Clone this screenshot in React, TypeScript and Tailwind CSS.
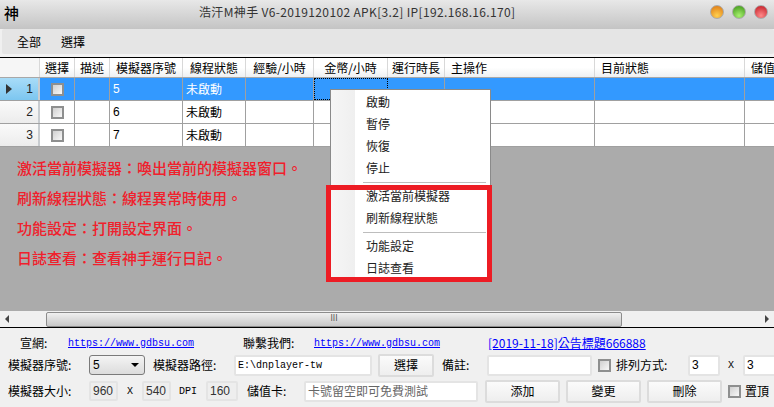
const cjk = "font-['Noto_Sans_CJK_TC','Noto_Sans_CJK_SC',sans-serif]";
const mono = "font-['Liberation_Mono',monospace]";
const num = "font-['Liberation_Sans',sans-serif]";

const COLS = "grid grid-cols-[40px_35px_35px_73px_63px_68px_74px_57px_150px_150px_150px]";
const headers = ["", "選擇", "描述", "模擬器序號", "線程狀態", "經驗/小時", "金幣/小時", "運行時長", "主操作", "目前狀態", "儲值卡"];

function Check({ className = "" }: { className?: string }) {
  return (
    <span className={`block w-[13px] h-[13px] border-2 border-[#8e8f8f] bg-gradient-to-br from-[#d0d0d0] to-[#f8f8f8] shrink-0 ${className}`} />
  );
}

function Row({ n, id, selected }: { n: number; id: string; selected?: boolean }) {
  const cell = `border-r border-[#a0a0a0] ${selected ? "bg-[#3399ff] text-white" : "bg-white text-black"}`;
  return (
    <div className={`${COLS} h-[23px] border-b border-[#a0a0a0] w-[950px] shrink-0`}>
      <div className={`flex items-center justify-between pr-[5px] pl-[6px] text-[12px] text-[#222] border-r-2 border-[#c8ccd0] ${num} ${selected ? "bg-gradient-to-b from-[#a8dcf8] to-[#7cc6f0]" : "bg-gradient-to-b from-[#fafafa] to-[#ececec]"}`}>
        {selected ? <span className="w-0 h-0 border-y-[5px] border-y-transparent border-l-[6px] border-l-[#333]" /> : <span />}
        <span>{n}</span>
      </div>
      <div className={`${cell} flex items-center justify-center`}><Check /></div>
      <div className={cell} />
      <div className={`${cell} flex items-center pl-[3px] text-[12px] ${num}`}>{id}</div>
      <div className={`${cell} flex items-center pl-[3px] text-[12px] ${cjk}`}>未啟動</div>
      <div className={cell} />
      <div className={`${cell} ${selected ? "border border-dotted border-black" : ""}`} />
      <div className={cell} />
      <div className={cell} />
      <div className={cell} />
      <div className={cell} />
    </div>
  );
}

function Btn({ children, className = "" }: { children: React.ReactNode; className?: string }) {
  return (
    <div className={`flex items-center justify-center border-2 border-[#dcdcdc] rounded-[2px] bg-gradient-to-b from-[#fbfbfb] to-[#eeeeee] text-[12px] text-black ${className}`}>
      {children}
    </div>
  );
}

function Field({ children, className = "", muted }: { children?: React.ReactNode; className?: string; muted?: boolean }) {
  return (
    <div className={`flex items-center pl-[2px] border-2 border-[#e4e4e4] rounded-[2px] ${muted ? "bg-[#eeeeee] text-[#333]" : "bg-white text-black"} ${className}`}>
      {children}
    </div>
  );
}

function MenuItem({ children }: { children: React.ReactNode }) {
  return <div className="h-[22px] pl-[35px] leading-[22px] text-[12px] text-[#222]">{children}</div>;
}

function MenuSep() {
  return <div className="ml-[32px] mr-[4px] mt-[3px] mb-[2px] h-px bg-[#bdbdbd]" />;
}

function Dot({ from, to }: { from: string; to: string }) {
  return (
    <span
      className="block w-[14px] h-[14px] rounded-full border border-[#aaa]"
      style={{ background: `radial-gradient(circle at 50% 80%, ${from}, ${to})` }}
    />
  );
}

export default function App() {
  return (
    <div className={`relative w-[774px] h-[407px] overflow-hidden bg-[#f0f0f0] flex flex-col ${cjk}`}>
      {/* title bar */}
      <div className="h-[29px] pb-[5px] flex items-center bg-gradient-to-b from-[#e8e8e8] to-[#c4c4c4] shrink-0">
        <span className="ml-[4px] w-[14px] text-[15px] font-medium leading-none text-black">神</span>
        <span className="ml-[181px] w-[316px] whitespace-nowrap text-[12px] tracking-[0.35px] text-[#333] font-['Noto_Sans_CJK_TC','DejaVu_Sans',sans-serif]">
          浩汗M神手 V6-2019120102 APK[3.2] IP[192.168.16.170]
        </span>
        <span className="ml-auto mr-[6px] flex gap-[8px]">
          <Dot from="#ffd050" to="#dc7410" />
          <Dot from="#a8f070" to="#3a9414" />
          <Dot from="#ff8a8a" to="#c01620" />
        </span>
      </div>

      {/* toolbar */}
      <div className="h-[25px] ml-[2px] flex items-center bg-[#e5e5e5] rounded-[2px] shrink-0 text-[12px] text-black">
        <span className="ml-[15px]">全部</span>
        <span className="ml-[20px]">選擇</span>
      </div>
      <div className="h-[3px] bg-[#f2f2f2] shrink-0" />

      {/* data grid */}
      <div className="flex-1 min-h-0 border-t border-black bg-[#ababab] overflow-hidden flex flex-col">
        <div className={`${COLS} h-[19px] w-[950px] shrink-0 text-[12px] text-black bg-gradient-to-b from-white via-white to-[#eef0f2]`}>
          {headers.map((h, i) => (
            <div key={i} className={`flex items-center pt-[1px] border-r border-[#d8d8d8] whitespace-nowrap ${i >= 1 && i <= 7 ? "justify-center" : "pl-[6px]"} ${i === 0 ? "bg-[#f6f6f6]" : ""}`}>
              {h}
            </div>
          ))}
        </div>
        <div className="h-px bg-[#a8a8a8] shrink-0" />
        <Row n={1} id="5" selected />
        <Row n={2} id="6" />
        <Row n={3} id="7" />
        <div className="flex-1 pl-[17px] pt-[10px] flex flex-col gap-[9px] text-[15px] leading-[21px] text-[#f0202c] font-medium">
          <div>激活當前模擬器：喚出當前的模擬器窗口。</div>
          <div>刷新線程狀態：線程異常時使用。</div>
          <div>功能設定：打開設定界面。</div>
          <div>日誌查看：查看神手運行日記。</div>
        </div>
      </div>

      {/* scrollbar */}
      <div className="h-[17px] shrink-0 flex items-center bg-[#f0f0f0] border-b border-black">
        <span className="ml-[5px] w-0 h-0 border-y-[4px] border-y-transparent border-r-[4px] border-r-[#444]" />
        <div className="ml-[37px] w-[576px] h-[15px] border border-[#8c8c8c] rounded-[2px] bg-gradient-to-b from-[#f0f0f0] to-[#c8c8c8] flex items-center justify-center text-[8px] text-[#555] font-['DejaVu_Sans',sans-serif] leading-none">
          ⅠⅠⅠ
        </div>
        <span className="ml-auto mr-[5px] w-0 h-0 border-y-[4px] border-y-transparent border-l-[4px] border-l-[#444]" />
      </div>

      {/* bottom panel */}
      <div className="h-[79px] shrink-0 flex flex-col text-[12px] text-black bg-[#f0f0f0]">
        <div className="h-[25px] flex items-center whitespace-nowrap pt-[5px] [&>*]:shrink-0">
          <span className="ml-[20px] w-[48px]">宣網:</span>
          <span className={`${mono} text-[10px] text-[#0000ff] underline w-[125px]`}>https://www.gdbsu.com</span>
          <span className="ml-[50px] w-[71px]">聯繫我們:</span>
          <span className={`${mono} text-[10px] text-[#0000ff] underline w-[125px]`}>https://www.gdbsu.com</span>
          <span className="ml-[49px] text-[#0000ff] underline">[2019-11-18]公告標題666888</span>
        </div>
        <div className="h-[24px] flex items-center whitespace-nowrap [&>*]:shrink-0">
          <span className="ml-[8px] w-[81px]">模擬器序號:</span>
          <div className={`w-[56px] h-[20px] border border-[#7a7a7a] rounded-[3px] bg-gradient-to-b from-[#f4f4f4] to-[#dcdcdc] flex items-center justify-between pl-[3px] pr-[5px] text-[12px] ${num}`}>
            5
            <span className="w-0 h-0 border-x-[4px] border-x-transparent border-t-[4px] border-t-black" />
          </div>
          <span className="ml-[8px] w-[81px]">模擬器路徑:</span>
          <Field className={`w-[138px] h-[21px] ${mono} text-[10px]`}>E:\dnplayer-tw</Field>
          <Btn className="ml-[6px] w-[56px] h-[23px]">選擇</Btn>
          <span className="ml-[8px] w-[45px]">備註:</span>
          <Field className="w-[105px] h-[21px]" />
          <Check className="ml-[6px]" />
          <span className="ml-[5px] w-[72px]">排列方式:</span>
          <Field className={`w-[32px] h-[21px] text-[12px] ${num}`}>3</Field>
          <span className={`ml-[8px] w-[15px] ${mono} text-[10px]`}>X</span>
          <Field className={`w-[40px] h-[21px] text-[12px] ${num}`}>3</Field>
        </div>
        <div className="h-[28px] flex items-center whitespace-nowrap [&>*]:shrink-0">
          <span className="ml-[8px] w-[81px]">模擬器大小:</span>
          <Field muted className={`w-[29px] h-[20px] text-[12px] ${num}`}>960</Field>
          <span className={`ml-[9px] w-[15px] ${mono} text-[10px]`}>X</span>
          <Field muted className={`w-[29px] h-[20px] text-[12px] ${num}`}>540</Field>
          <span className={`ml-[8px] w-[27px] ${mono} text-[10px]`}>DPI</span>
          <Field muted className={`w-[32px] h-[20px] text-[12px] ${num}`}>160</Field>
          <span className="ml-[9px] w-[57px]">儲值卡:</span>
          <Field className="w-[174px] h-[21px] text-[12px] !text-[#666]">卡號留空即可免費測試</Field>
          <Btn className="ml-[7px] w-[75px] h-[23px]">添加</Btn>
          <Btn className="ml-[6px] w-[75px] h-[23px]">變更</Btn>
          <Btn className="ml-[6px] w-[75px] h-[23px]">刪除</Btn>
          <Check className="ml-[6px]" />
          <span className="ml-[4px]">置頂</span>
        </div>
      </div>

      {/* context menu */}
      <div className="absolute left-[330px] top-[89px] w-[161px] h-[190px] bg-white border border-[#8a8a8a] overflow-hidden">
        <div className="absolute left-0 top-0 bottom-0 w-[24px] bg-gradient-to-r from-[#f6f6f6] to-[#efefef]" />
        <div className="relative pt-[1px]">
          <MenuItem>啟動</MenuItem>
          <MenuItem>暫停</MenuItem>
          <MenuItem>恢復</MenuItem>
          <MenuItem>停止</MenuItem>
          <MenuSep />
          <MenuItem>激活當前模擬器</MenuItem>
          <MenuItem>刷新線程狀態</MenuItem>
          <MenuSep />
          <MenuItem>功能設定</MenuItem>
          <MenuItem>日誌查看</MenuItem>
        </div>
      </div>

      {/* red highlight annotation */}
      <div className="absolute left-[326px] top-[185px] w-[166px] h-[97px] border-[5px] border-[#ed1c24]" />
    </div>
  );
}
